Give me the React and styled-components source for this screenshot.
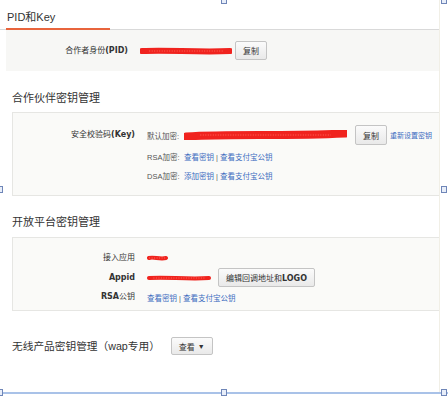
import React from "react";
import styled, { createGlobalStyle } from "styled-components";

const Global = createGlobalStyle`
  html, body { margin: 0; padding: 0; background: #fff; }
  body { width: 448px; height: 396px; overflow: hidden;
    font-family: "Liberation Sans", "Noto Sans CJK SC", sans-serif; color: #333; }
`;

const Stage = styled.div`
  position: relative;
  width: 448px;
  height: 396px;
`;

const Frame = styled.div`
  width: 440px;
  height: 392px;
  border-right: 1px solid #f1efe6;
  box-sizing: border-box;
  display: flex;
  flex-direction: column;
`;

const TabBar = styled.div`
  display: flex;
  border-bottom: 1px solid #d9d9d9;
  padding-left: 6px;
`;

const Tab = styled.div`
  width: 103px;
  padding: 10px 0 4px 1px;
  line-height: 14px;
  font-size: 11px;
  color: #333;
  border-bottom: 2px solid #e8643c;
  margin-bottom: -1px;
`;

const Panel = styled.div`
  margin-left: ${(p) => p.$left}px;
  background: ${(p) => (p.$bordered ? "#fafaf8" : "#f7f7f5")};
  border: ${(p) => (p.$bordered ? "1px solid #e6e6e3" : "none")};
  border-right: none;
  padding: ${(p) => p.$pad};
  display: grid;
  grid-template-columns: 122px 1fr;
  column-gap: 12px;
  row-gap: ${(p) => p.$gap || 0}px;
  align-items: center;
`;

const Label = styled.div`
  text-align: right;
  font-size: 8px;
  line-height: ${(p) => p.$h || 16}px;
  color: #333;
  white-space: nowrap;
  font-weight: ${(p) => (p.$bold ? 700 : 400)};
  b { font-family: "DejaVu Sans", sans-serif; font-weight: 700; }
`;

const Value = styled.div`
  display: flex;
  align-items: center;
  gap: ${(p) => p.$gap || 4}px;
  height: ${(p) => p.$h || 16}px;
  font-size: 8px;
  white-space: nowrap;
`;

const SubGrid = styled.div`
  display: grid;
  grid-template-columns: 37px 1fr;
  align-items: center;
  font-size: 8px;
`;

const SubLabel = styled.span`
  color: #555;
  font-size: 7.5px;
`;

const Btn = styled.button`
  height: ${(p) => p.$h || 19}px;
  padding: 0 ${(p) => p.$px || 6}px;
  font-family: inherit;
  font-size: 8px;
  color: #333;
  background: linear-gradient(#fbfbfb, #e9e9e9);
  border: 1px solid #c4c4c4;
  border-radius: 2px;
  display: inline-flex;
  align-items: center;
  gap: 3px;
  b { font-family: "DejaVu Sans", sans-serif; }
`;

const Link = styled.a`
  color: #3a6bbf;
  text-decoration: none;
  font-size: 7.5px;
`;

const Sep = styled.span`
  color: #666;
  font-size: 7.5px;
  margin: 0 2px;
`;

const Heading = styled.div`
  margin: ${(p) => p.$mt}px 0 ${(p) => p.$mb}px 12px;
  font-size: 11px;
  line-height: 16px;
  color: #333;
  display: flex;
  align-items: center;
  gap: 11px;
`;

const Handle = styled.div`
  position: absolute;
  width: 6px;
  height: 7px;
  border: 1px solid #6f86b8;
  background: #e8eef9;
  box-sizing: border-box;
  left: ${(p) => p.$x}px;
  top: ${(p) => p.$y}px;
`;

const SelLine = styled.div`
  position: absolute;
  left: 0;
  right: 0;
  top: 392px;
  height: 2px;
  background: #a9c2e8;
`;

const Scribble = ({ w, h = 8, tilt = 0 }) => (
  <svg width={w} height={h} viewBox={`0 0 ${w} ${h}`} style={{ display: "block" }}>
    <path
      d={`M2 ${h / 2 + tilt} C ${w * 0.3} ${h / 2 - 1.5}, ${w * 0.6} ${h / 2 + 1.5}, ${w - 2} ${h / 2 - tilt}`}
      stroke="#f0231e"
      strokeWidth={Math.max(h - 2, 3)}
      strokeLinecap="round"
      fill="none"
    />
    <path
      d={`M${w * 0.1} ${h / 2} L ${w * 0.9} ${h / 2}`}
      stroke="#ff6a5d"
      strokeWidth="1"
      strokeDasharray="1 1.5"
      fill="none"
    />
  </svg>
);

export default function App() {
  return (
    <Stage>
      <Global />
      <Frame>
        <TabBar>
          <Tab>PID和Key</Tab>
        </TabBar>
        <Panel $left={6} $pad="11px 0">
          <Label $h={19}>
            合作者身份<b>(PID)</b>
          </Label>
          <Value $h={19} $gap={3}>
            <Scribble w={92} h={8} />
            <Btn $px={7}>复制</Btn>
          </Value>
        </Panel>

        <Heading $mt={19} $mb={6}>合作伙伴密钥管理</Heading>
        <Panel $left={12} $bordered $pad="12px 0 12px" $gap={3}>
          <Label $h={20}>
            安全校验码<b>(Key)</b>
          </Label>
          <SubGrid>
            <SubLabel>默认加密:</SubLabel>
            <Value $h={20} $gap={8}>
              <Scribble w={163} h={10} tilt={1.5} />
              <Btn $px={7} $h={20}>复制</Btn>
              <Link href="#" style={{ marginLeft: -5, fontSize: 7 }}>重新设置密钥</Link>
            </Value>
          </SubGrid>
          <div />
          <SubGrid>
            <SubLabel>RSA加密:</SubLabel>
            <Value>
              <span>
                <Link href="#">查看密钥</Link>
                <Sep>|</Sep>
                <Link href="#">查看支付宝公钥</Link>
              </span>
            </Value>
          </SubGrid>
          <div />
          <SubGrid>
            <SubLabel>DSA加密:</SubLabel>
            <Value>
              <span>
                <Link href="#">添加密钥</Link>
                <Sep>|</Sep>
                <Link href="#">查看支付宝公钥</Link>
              </span>
            </Value>
          </SubGrid>
        </Panel>

        <Heading $mt={18} $mb={7}>开放平台密钥管理</Heading>
        <Panel $left={12} $bordered $pad="12px 0 5px" $gap={2}>
          <Label>接入应用</Label>
          <Value>
            <Scribble w={21} h={6} />
          </Value>
          <Label $bold $h={19}>
            <b>Appid</b>
          </Label>
          <Value $h={19} $gap={7}>
            <Scribble w={64} h={6} />
            <Btn $px={7}>
              <span>
                编辑回调地址和<b>LOGO</b>
              </span>
            </Btn>
          </Value>
          <Label>
            <b>RSA</b>公钥
          </Label>
          <Value>
            <span>
              <Link href="#">查看密钥</Link>
              <Sep>|</Sep>
              <Link href="#">查看支付宝公钥</Link>
            </span>
          </Value>
        </Panel>

        <Heading $mt={26} $mb={0}>
          <span style={{ fontSize: 10.7 }}>无线产品密钥管理（wap专用）</span>
          <Btn $h={18} $px={7}>
            查看 <span style={{ fontSize: 7 }}>▼</span>
          </Btn>
        </Heading>
      </Frame>

      <SelLine />
      <Handle $x={221} $y={-3} />
      <Handle $x={441} $y={-3} />
      <Handle $x={441} $y={186} />
      <Handle $x={-3} $y={186} />
      <Handle $x={-3} $y={389} />
      <Handle $x={221} $y={389} />
      <Handle $x={441} $y={389} />
    </Stage>
  );
}
